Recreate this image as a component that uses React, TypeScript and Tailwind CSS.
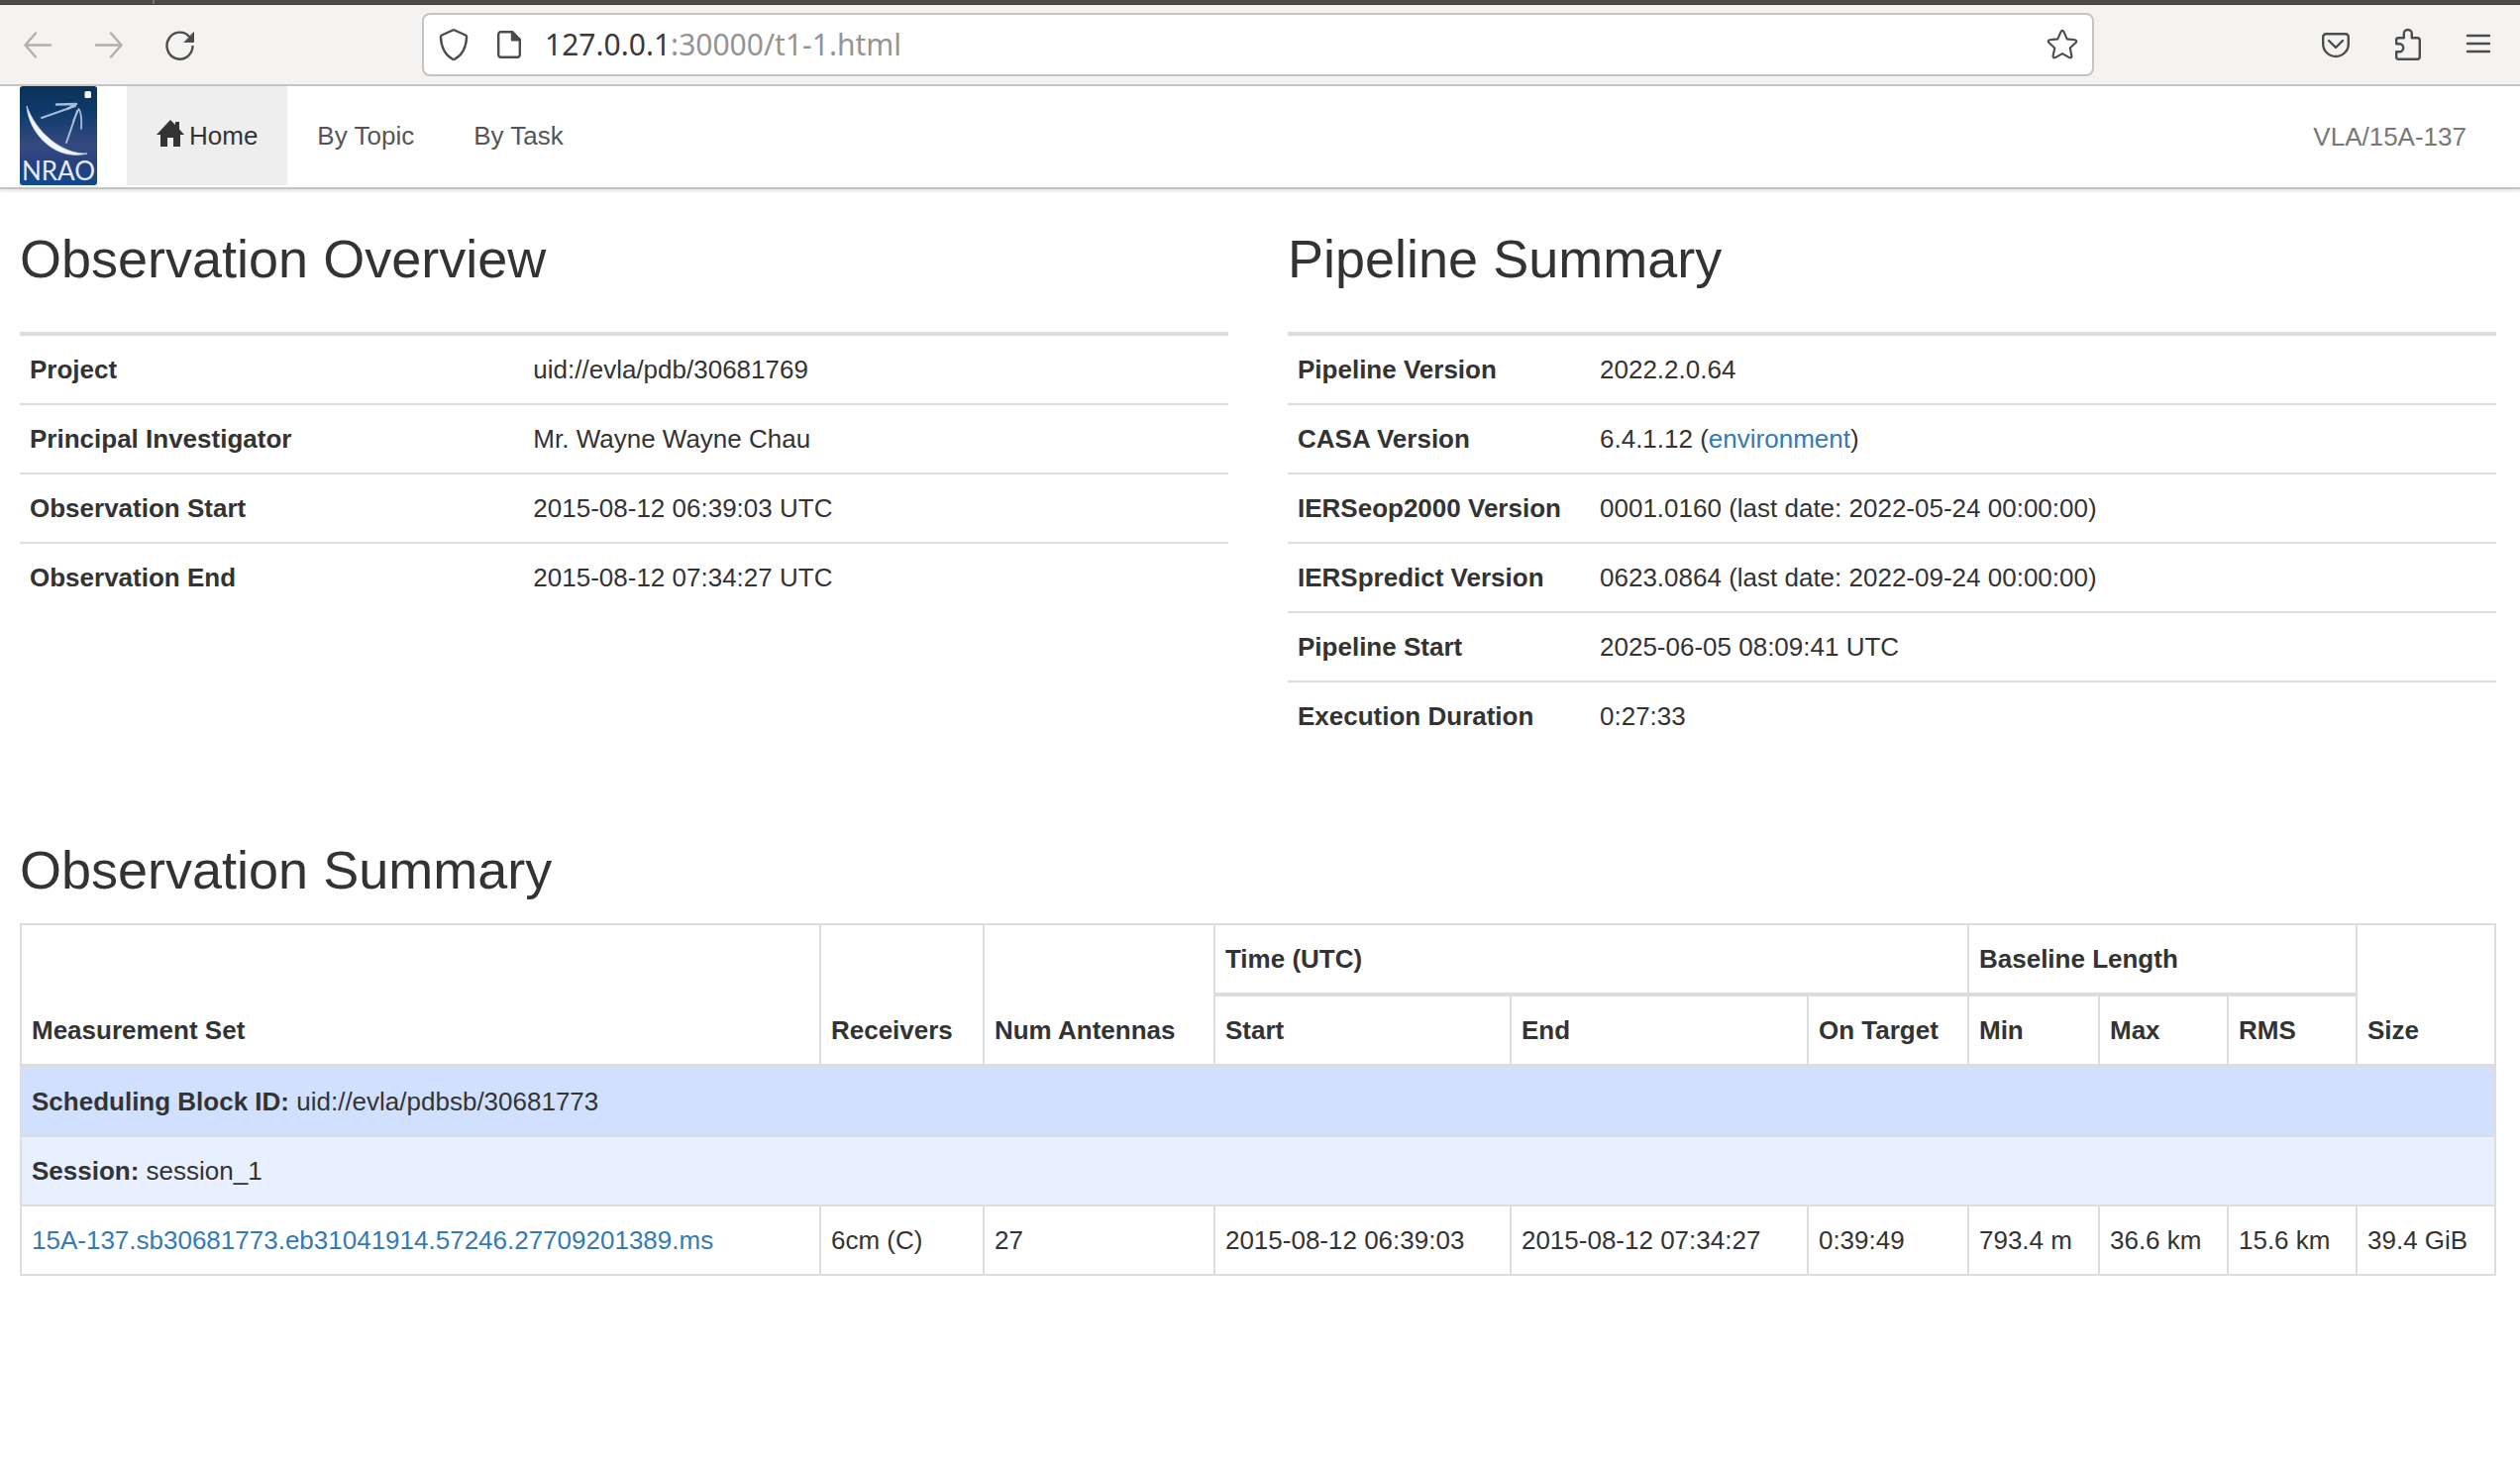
import React from "react";

const observation = [
  ["Project", "uid://evla/pdb/30681769"],
  ["Principal Investigator", "Mr. Wayne Wayne Chau"],
  ["Observation Start", "2015-08-12 06:39:03 UTC"],
  ["Observation End", "2015-08-12 07:34:27 UTC"],
];

const pipeline: [string, React.ReactNode][] = [
  ["Pipeline Version", "2022.2.0.64"],
  [
    "CASA Version",
    <>
      6.4.1.12 (<a href="#environment" className="text-[#337ab7]">environment</a>)
    </>,
  ],
  ["IERSeop2000 Version", "0001.0160 (last date: 2022-05-24 00:00:00)"],
  ["IERSpredict Version", "0623.0864 (last date: 2022-09-24 00:00:00)"],
  ["Pipeline Start", "2025-06-05 08:09:41 UTC"],
  ["Execution Duration", "0:27:33"],
];

const stroke = {
  fill: "none",
  stroke: "currentColor",
  strokeWidth: 2.4,
  strokeLinecap: "round" as const,
  strokeLinejoin: "round" as const,
};

function Toolbar() {
  return (
    <header className="flex h-[82px] items-center border-b-2 border-[#c8c4c0] bg-[#f4f3f1] pr-[26px] pl-[22px] text-[#4c4c4c]">
      <div className="flex w-[404px] shrink-0 items-center gap-10">
        <button aria-label="Back" className="text-[#b0b0ae]">
          <svg width="32" height="32" viewBox="0 0 32 32" {...stroke}>
            <path d="M29 16.500H3.500M14 4.500L3.500 16.500l10.500 12" />
          </svg>
        </button>
        <button aria-label="Forward" className="text-[#b0b0ae]">
          <svg width="32" height="32" viewBox="0 0 32 32" {...stroke}>
            <path d="M3 16.500h25.500M18 4.500l10.500 12L18 28.500" />
          </svg>
        </button>
        <button aria-label="Reload">
          <svg width="32" height="36" viewBox="0 0 32 36" {...stroke}>
            <path d="M28.500 20A13 13.500 0 1 1 25.500 10.500" />
            <path d="M29.500 6v9.500H20.500z" fill="currentColor" strokeWidth="1" />
          </svg>
        </button>
      </div>
      <div className="flex h-16 flex-1 items-center rounded-lg border-2 border-[#c6c4c2] bg-white px-3.5">
        <button aria-label="Site protection">
          <svg width="32" height="40" viewBox="0 0 32 40" {...stroke}>
            <path d="M15 5.500q1-.5 2 0l11 5q1.200.6 1.100 2C28.500 22.500 25 30.500 17 34.700q-1 .5-2 0C7 30.500 3.500 22.500 2.900 12.500q-.1-1.400 1.100-2z" />
          </svg>
        </button>
        <button aria-label="Site information" className="ml-6">
          <svg width="32" height="32" viewBox="0 0 32 32" {...stroke}>
            <path d="M19 3.200H7.700a2.500 2.500 0 0 0-2.500 2.500v20.600a2.500 2.500 0 0 0 2.500 2.500h16.600a2.500 2.500 0 0 0 2.500-2.500V11z" />
            <path d="M19 3.200v8h7.800z" fill="currentColor" />
          </svg>
        </button>
        <div className="ml-5 flex-1 font-['Noto_Sans',sans-serif] text-[30px] leading-10 text-[#949494]">
          <span className="text-[#3a3a3a]">127.0.0.1</span>:30000/t1-1.html
        </div>
        <button aria-label="Bookmark this page">
          <svg width="32" height="32" viewBox="0 0 36 36" {...stroke}>
            <path d="M16.300 3.500q1.700-3 3.400 0l3.600 8.200 9 1q3 .7 1 3l-6.600 6.200 1.900 9q0 3-2.700 1.800L18 28.200l-7.900 4.500q-2.700 1.200-2.700-1.800l1.900-9-6.600-6.200q-2-2.300 1-3l9-1z" />
          </svg>
        </button>
      </div>
      <div className="flex w-[404px] shrink-0 items-center justify-end gap-10">
        <button aria-label="Save to Pocket">
          <svg width="32" height="32" viewBox="0 0 32 32" {...stroke}>
            <path d="M6.200 5.200h19.600a3 3 0 0 1 3 3v7a12.800 12.800 0 0 1-25.600 0v-7a3 3 0 0 1 3-3zM9 12l7 7 7-7" />
          </svg>
        </button>
        <button aria-label="Extensions">
          <svg width="32" height="36" viewBox="0 0 32 36" {...stroke}>
            <path d="M7.200 11.200h5.600V7a4 4 0 0 1 8 0v4.200h5.500a2.500 2.500 0 0 1 2.500 2.500v16.600a2.500 2.500 0 0 1-2.500 2.500H7.200a2 2 0 0 1-2-2v-5.600h3a4 4 0 0 0 0-8h-3v-4a2 2 0 0 1 2-2z" />
          </svg>
        </button>
        <button aria-label="Menu">
          <svg width="32" height="32" viewBox="0 0 32 32" {...stroke}>
            <path d="M5 7h22M5 15h22M5 23h22" />
          </svg>
        </button>
      </div>
    </header>
  );
}

function Logo() {
  return (
    <svg viewBox="0 0 78 100" className="h-[100px] w-[78px]" role="img" aria-label="NRAO">
      <defs>
        <linearGradient id="sky" x1="0" y1="0" x2="0" y2="1">
          <stop offset="0" stopColor="#0b3158" />
          <stop offset="0.25" stopColor="#0d3a6c" />
          <stop offset="0.6" stopColor="#354a80" />
          <stop offset="0.8" stopColor="#254080" />
          <stop offset="1" stopColor="#104a90" />
        </linearGradient>
      </defs>
      <rect width="78" height="100" rx="3" fill="url(#sky)" />
      <rect x="65.500" y="5" width="6.500" height="7" rx="1.500" fill="#f4f8ff" />
      <path d="M7 20C9 48 36 76 68 68 42 69 16 46 7 20z" fill="#f4f6fb" stroke="#c9d4ea" strokeWidth="0.8" />
      <g fill="none" stroke="#a9bad8" strokeLinecap="round" strokeLinejoin="round">
        <path d="M22 32L56 20" strokeWidth="2" />
        <path d="M37 18.500L57 18 48 23" strokeWidth="2.500" />
        <path d="M47 57L58 25" strokeWidth="2" />
        <path d="M54 35l5.500-12q3.500 4 2.500 20" strokeWidth="1.800" />
      </g>
      <text x="39" y="95" textAnchor="middle" fontSize="26" fill="#e3ebf8" fontFamily="Lato, sans-serif">
        NRAO
      </text>
    </svg>
  );
}

function Nav() {
  return (
    <nav className="flex h-[104px] items-start border-b-2 border-[#c4c4c4] bg-white pr-[54px] pl-5 text-[#555] shadow-[0_2px_3px_rgba(0,0,0,0.12)]">
      <a href="#nrao" className="mr-[30px]">
        <Logo />
      </a>
      <a href="#home" className="flex h-[100px] items-center gap-[5px] bg-[#eee] px-[30px] text-[#333]">
        <svg width="28" height="32" viewBox="0 0 28 32" fill="currentColor" aria-hidden="true">
          <path d="M14 0l5 5V2h4v7.500l5 5.500h-4v12h-7v-9h-6v9H4V15H0z" />
        </svg>
        Home
      </a>
      <a href="#topic" className="flex h-[100px] items-center px-[30px]">By Topic</a>
      <a href="#task" className="flex h-[100px] items-center px-[30px]">By Task</a>
      <span className="ml-auto flex h-[102px] items-center text-[#777]">VLA/15A-137</span>
    </nav>
  );
}

function Facts({ title, rows, labelWidth }: { title: string; rows: React.ReactNode[][]; labelWidth: string }) {
  return (
    <section>
      <h1 className="text-[54px] leading-[60px]">{title}</h1>
      <table className="mt-11 w-full table-fixed border-separate border-spacing-0 border-t-2 border-[#ddd] text-left">
        <colgroup>
          <col className={labelWidth} />
          <col />
        </colgroup>
        <tbody>
          {rows.map(([label, value], i) => (
            <tr key={i}>
              <th scope="row" className="border-t-2 border-[#ddd] px-2.5 py-[15px] font-bold">{label}</th>
              <td className="border-t-2 border-[#ddd] px-2.5 py-[15px]">{value}</td>
            </tr>
          ))}
        </tbody>
      </table>
    </section>
  );
}

function Summary() {
  const head = "border-2 border-b-4 border-[#ddd] px-2.5 py-[15px] align-bottom font-bold";
  const cell = "border-2 border-[#ddd] px-2.5 py-[15px]";
  const values = [
    "6cm (C)", "27", "2015-08-12 06:39:03", "2015-08-12 07:34:27", "0:39:49",
    "793.4 m", "36.6 km", "15.6 km", "39.4 GiB",
  ];
  return (
    <section className="mt-[91px]">
      <h1 className="text-[54px] leading-[60px]">Observation Summary</h1>
      <table className="mt-6 w-full table-fixed border-collapse text-left">
        <colgroup>
          <col />
          <col className="w-[165px]" />
          <col className="w-[233px]" />
          <col className="w-[299px]" />
          <col className="w-[300px]" />
          <col className="w-[162px]" />
          <col className="w-[132px]" />
          <col className="w-[130px]" />
          <col className="w-[130px]" />
          <col className="w-[140px]" />
        </colgroup>
        <thead>
          <tr>
            <th rowSpan={2} className={head}>Measurement Set</th>
            <th rowSpan={2} className={head}>Receivers</th>
            <th rowSpan={2} className={head}>Num Antennas</th>
            <th colSpan={3} className={head}>Time (UTC)</th>
            <th colSpan={3} className={head}>Baseline Length</th>
            <th rowSpan={2} className={head}>Size</th>
          </tr>
          <tr>
            {["Start", "End", "On Target", "Min", "Max", "RMS"].map((t) => (
              <th key={t} className={head}>{t}</th>
            ))}
          </tr>
        </thead>
        <tbody>
          <tr className="bg-[#d1e0ff]">
            <td colSpan={10} className={cell}><b>Scheduling Block ID:</b> uid://evla/pdbsb/30681773</td>
          </tr>
          <tr className="bg-[#e8efff]">
            <td colSpan={10} className={cell}><b>Session:</b> session_1</td>
          </tr>
          <tr>
            <td className={cell}>
              <a href="#ms" className="text-[#337ab7]">15A-137.sb30681773.eb31041914.57246.27709201389.ms</a>
            </td>
            {values.map((v) => (
              <td key={v} className={cell}>{v}</td>
            ))}
          </tr>
        </tbody>
      </table>
    </section>
  );
}

export default function App() {
  return (
    <div className="min-h-screen bg-white font-['Liberation_Sans',Arial,sans-serif] text-[26px] leading-[38px] text-[#333]">
      <div className="flex h-[5px] border-b border-[#3a3935] bg-[#4b4a44]">
        <div className="w-[156px] border-r-2 border-[#74736d]" />
      </div>
      <Toolbar />
      <Nav />
      <main className="pt-10 pr-6 pb-10 pl-5">
        <div className="grid grid-cols-2 gap-[60px]">
          <Facts title="Observation Overview" rows={observation} labelWidth="w-5/12" />
          <Facts title="Pipeline Summary" rows={pipeline} labelWidth="w-1/4" />
        </div>
        <Summary />
      </main>
    </div>
  );
}
